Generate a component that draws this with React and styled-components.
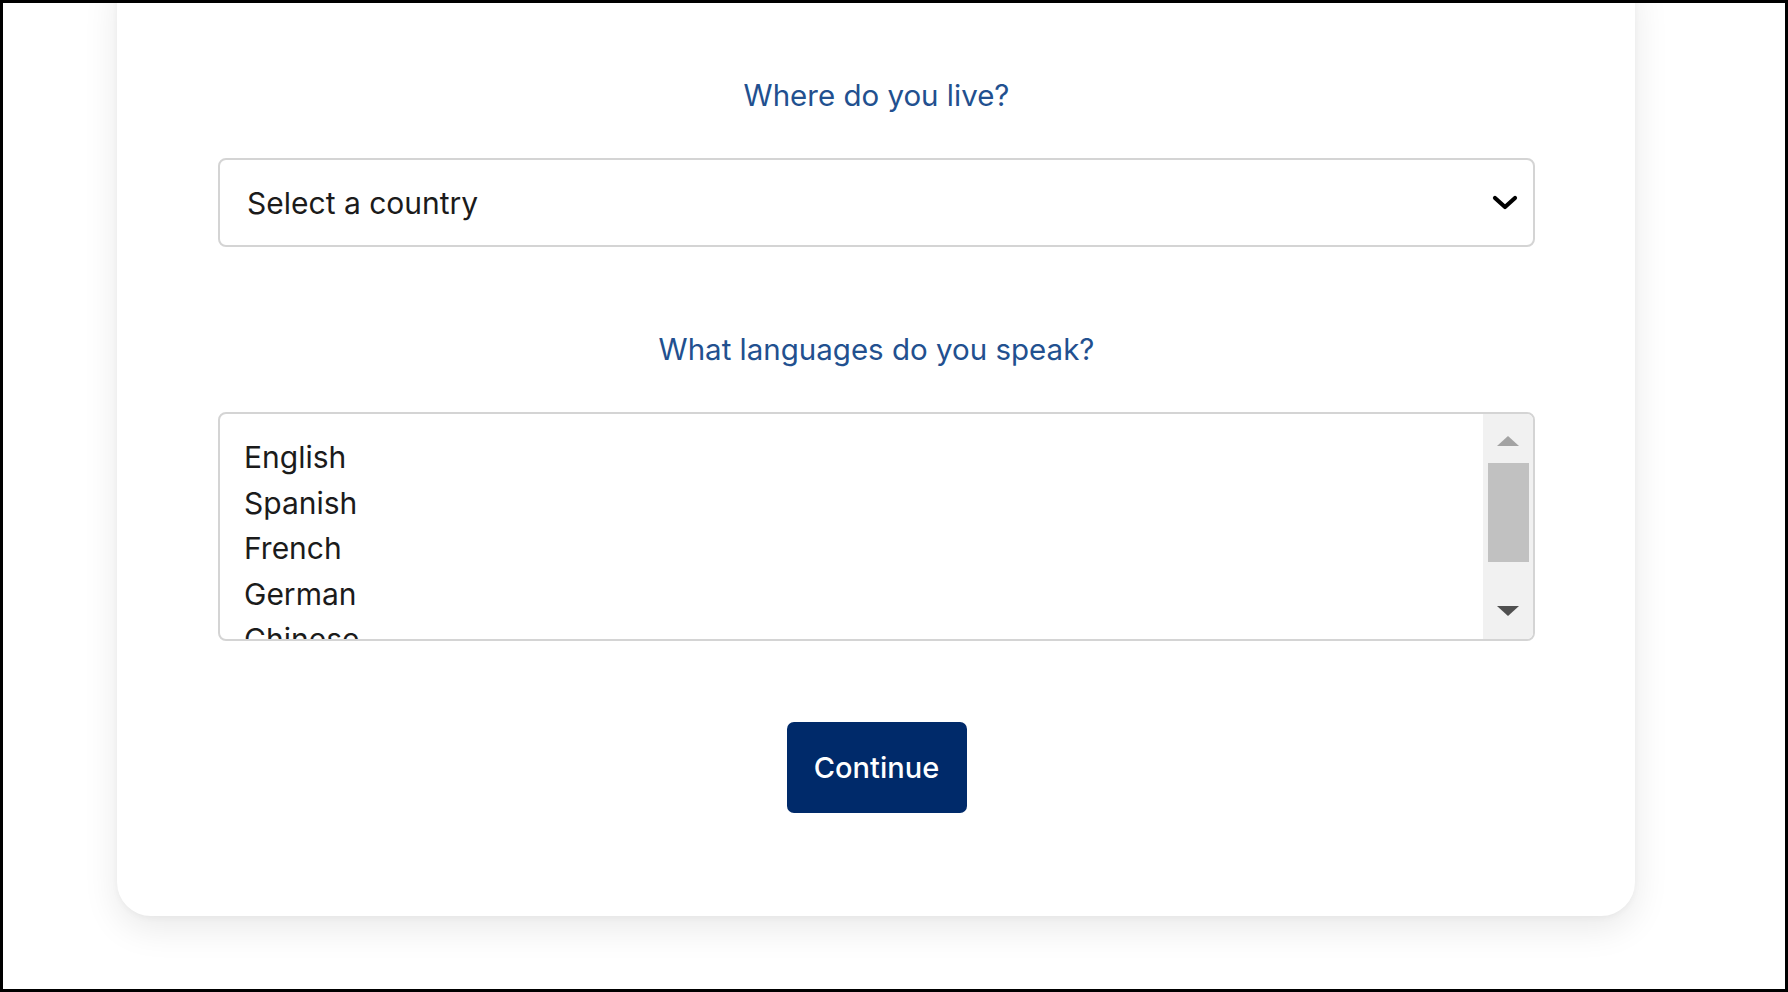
import React from "react";
import styled, { createGlobalStyle } from "styled-components";

const Global = createGlobalStyle`
  html, body { margin: 0; padding: 0; background: #fff; }
  body { font-family: Inter, "Open Sans", Arial, sans-serif; }
  * { box-sizing: border-box; }
`;

const Frame = styled.div`
  width: 1788px;
  height: 992px;
  border: 3px solid #000;
  background: #fff;
  overflow: hidden;
`;

const Card = styled.section`
  margin: -40px 0 0 114px;
  width: 1518px;
  padding: 40px 100px 0 101px;
  height: 953px;
  background: #fff;
  border-radius: 34px;
  box-shadow: 0 12px 36px rgba(0, 0, 0, 0.09), 0 2px 6px rgba(0, 0, 0, 0.04);
  display: flex;
  flex-direction: column;
  align-items: stretch;
`;

const Question = styled.h2`
  margin: ${(p) => p.$top}px 0 0;
  font-family: Inter, "Open Sans", sans-serif;
  font-weight: 400;
  font-size: 29.5px;
  line-height: 36px;
  color: #22508f;
  text-align: center;
  letter-spacing: 0;
`;

const SelectBox = styled.div`
  margin-top: 45px;
  height: 89px;
  border: 2px solid #d4d4d4;
  border-radius: 8px;
  display: flex;
  align-items: center;
  justify-content: space-between;
  padding: 0 15px 0 27px;
  font-size: 30px;
  color: #1b1b1b;
`;

const ListBox = styled.div`
  margin-top: 45px;
  height: 229px;
  border: 2px solid #d4d4d4;
  border-radius: 8px;
  display: flex;
  overflow: hidden;
`;

const Items = styled.ul`
  flex: 1;
  list-style: none;
  margin: 0;
  padding: 21px 24px 0;
  overflow: hidden;
`;

const Item = styled.li`
  font-size: 30px;
  line-height: 45.5px;
  color: #1b1b1b;
  height: 45.5px;
`;

const Scrollbar = styled.div`
  width: 50px;
  background: #f1f1f1;
  display: flex;
  flex-direction: column;
  align-items: center;
  padding: 22px 4px 23px;
`;

const Arrow = styled.div`
  width: 0;
  height: 0;
  border-left: 11px solid transparent;
  border-right: 11px solid transparent;
  ${(p) =>
    p.$up
      ? `border-bottom: 10px solid #a3a3a3;`
      : `border-top: 10px solid #505050;`}
`;

const Thumb = styled.div`
  margin-top: 17px;
  width: 41px;
  height: 99px;
  background: #c1c1c1;
`;

const Spacer = styled.div`
  flex: 1;
`;

const ButtonRow = styled.div`
  margin-top: 81px;
  display: flex;
  justify-content: center;
`;

const Button = styled.button`
  width: 180px;
  height: 91px;
  border: none;
  border-radius: 7px;
  background: #002a6a;
  color: #fff;
  font-family: Inter, "Open Sans", sans-serif;
  font-size: 29px;
  font-weight: 500;
  cursor: pointer;
`;

const Chevron = () => (
  <svg width="26" height="18" viewBox="0 0 26 18">
    <path d="M3 4 L13 13 L23 4" fill="none" stroke="#000" strokeWidth="4.2" strokeLinecap="round" strokeLinejoin="round" />
  </svg>
);

const languages = ["English", "Spanish", "French", "German", "Chinese"];

export default function App() {
  return (
    <>
      <Global />
      <Frame>
        <Card>
          <Question $top={74}>Where do you live?</Question>
          <SelectBox>
            <span>Select a country</span>
            <Chevron />
          </SelectBox>
          <Question $top={84}>What languages do you speak?</Question>
          <ListBox>
            <Items>
              {languages.map((l) => (
                <Item key={l}>{l}</Item>
              ))}
            </Items>
            <Scrollbar>
              <Arrow $up />
              <Thumb />
              <Spacer />
              <Arrow />
            </Scrollbar>
          </ListBox>
          <ButtonRow>
            <Button>Continue</Button>
          </ButtonRow>
        </Card>
      </Frame>
    </>
  );
}
